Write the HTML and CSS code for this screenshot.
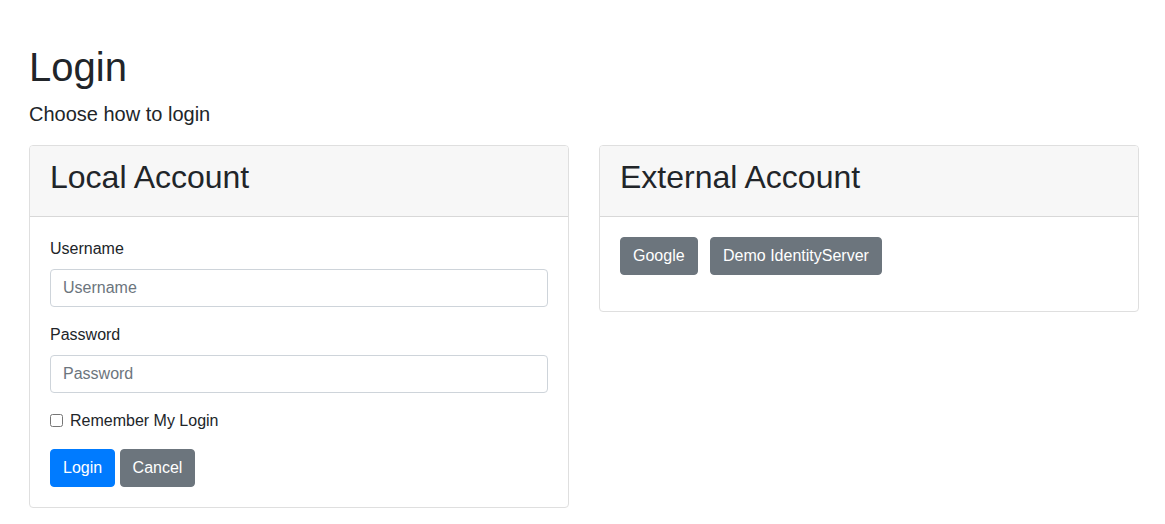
FILE: index.html
```html
<!DOCTYPE html>
<html lang="en">
<head>
<meta charset="utf-8">
<title>Login</title>
<link rel="stylesheet" href="styles.css">
</head>
<body>
<main class="login-page">
  <header class="lead">
    <h1 class="lead-title">Login</h1>
    <p class="lead-text">Choose how to login</p>
  </header>
  <div class="row">
    <section class="card">
      <div class="card-header"><h2 class="card-title">Local Account</h2></div>
      <form class="card-body">
        <div class="form-group">
          <label class="label" for="username">Username</label>
          <input class="form-control" id="username" type="text" placeholder="Username">
        </div>
        <div class="form-group">
          <label class="label" for="password">Password</label>
          <input class="form-control" id="password" type="password" placeholder="Password">
        </div>
        <div class="form-group check">
          <input class="check-input" id="remember" type="checkbox">
          <label for="remember">Remember My Login</label>
        </div>
        <div class="actions">
          <button class="btn btn-primary" type="submit">Login</button>
          <button class="btn btn-secondary" type="button">Cancel</button>
        </div>
      </form>
    </section>
    <section class="card">
      <div class="card-header"><h2 class="card-title">External Account</h2></div>
      <div class="card-body">
        <ul class="providers">
          <li class="provider"><a class="btn btn-secondary" href="#google">Google</a></li>
          <li class="provider"><a class="btn btn-secondary" href="#demo">Demo IdentityServer</a></li>
        </ul>
      </div>
    </section>
  </div>
</main>
</body>
</html>
```
FILE: styles.css
```css
*,
*::before,
*::after {
  box-sizing: border-box;
}

body {
  margin: 0;
  padding-left: 3px;
  background: #fff;
  color: #212529;
  font-family: "Liberation Sans", Arial, sans-serif;
  font-size: 16px;
  line-height: 24px;
}

h1,
h2,
p,
ul {
  margin: 0;
  padding: 0;
}

.login-page {
  max-width: 1140px;
  margin: 0 auto;
  padding: 43px 15px 16px;
}

.lead {
  margin-bottom: 16px;
}

.lead-title {
  margin-bottom: 8px;
  font-size: 40px;
  font-weight: 400;
  line-height: 48px;
}

.lead-text {
  font-size: 20px;
  line-height: 30px;
}

.row {
  display: grid;
  grid-template-columns: 1fr 1fr;
  align-items: start;
  gap: 30px;
}

.card {
  border: 1px solid #dfdfdf;
  border-radius: 4px;
  background: #fff;
}

.card-header {
  padding: 12px 20px 20px;
  border-bottom: 1px solid #d8d8d8;
  border-radius: 3px 3px 0 0;
  background: #f7f7f7;
}

.card-title {
  font-size: 32px;
  font-weight: 400;
  line-height: 38px;
}

.card-body {
  padding: 20px;
}

.form-group {
  margin-bottom: 16px;
}

.label {
  display: block;
  margin-bottom: 8px;
}

.form-control {
  display: block;
  width: 100%;
  height: 38px;
  padding: 6px 12px;
  border: 1px solid #ced4da;
  border-radius: 4px;
  background: #fff;
  color: #495057;
  font: inherit;
}

.form-control::placeholder {
  color: #6c757d;
  opacity: 1;
}

.check {
  display: flex;
  align-items: flex-start;
  gap: 7px;
}

.check-input {
  width: 13px;
  height: 13px;
  margin: 5px 0 0;
}

.btn {
  display: inline-block;
  padding: 6px 12px;
  border: 1px solid transparent;
  border-radius: 4px;
  color: #fff;
  font: inherit;
  text-align: center;
  text-decoration: none;
  vertical-align: middle;
  cursor: pointer;
}

.btn-primary {
  border-color: #007bff;
  background: #007bff;
}

.btn-secondary {
  border-color: #6c757d;
  background: #6c757d;
}

.providers {
  margin-bottom: 16px;
  list-style: none;
}

.provider {
  display: inline-block;
}

.provider:not(:last-child) {
  margin-right: 8px;
}

@media (max-width: 600px) {
  .row {
    grid-template-columns: 1fr;
  }
}
```
